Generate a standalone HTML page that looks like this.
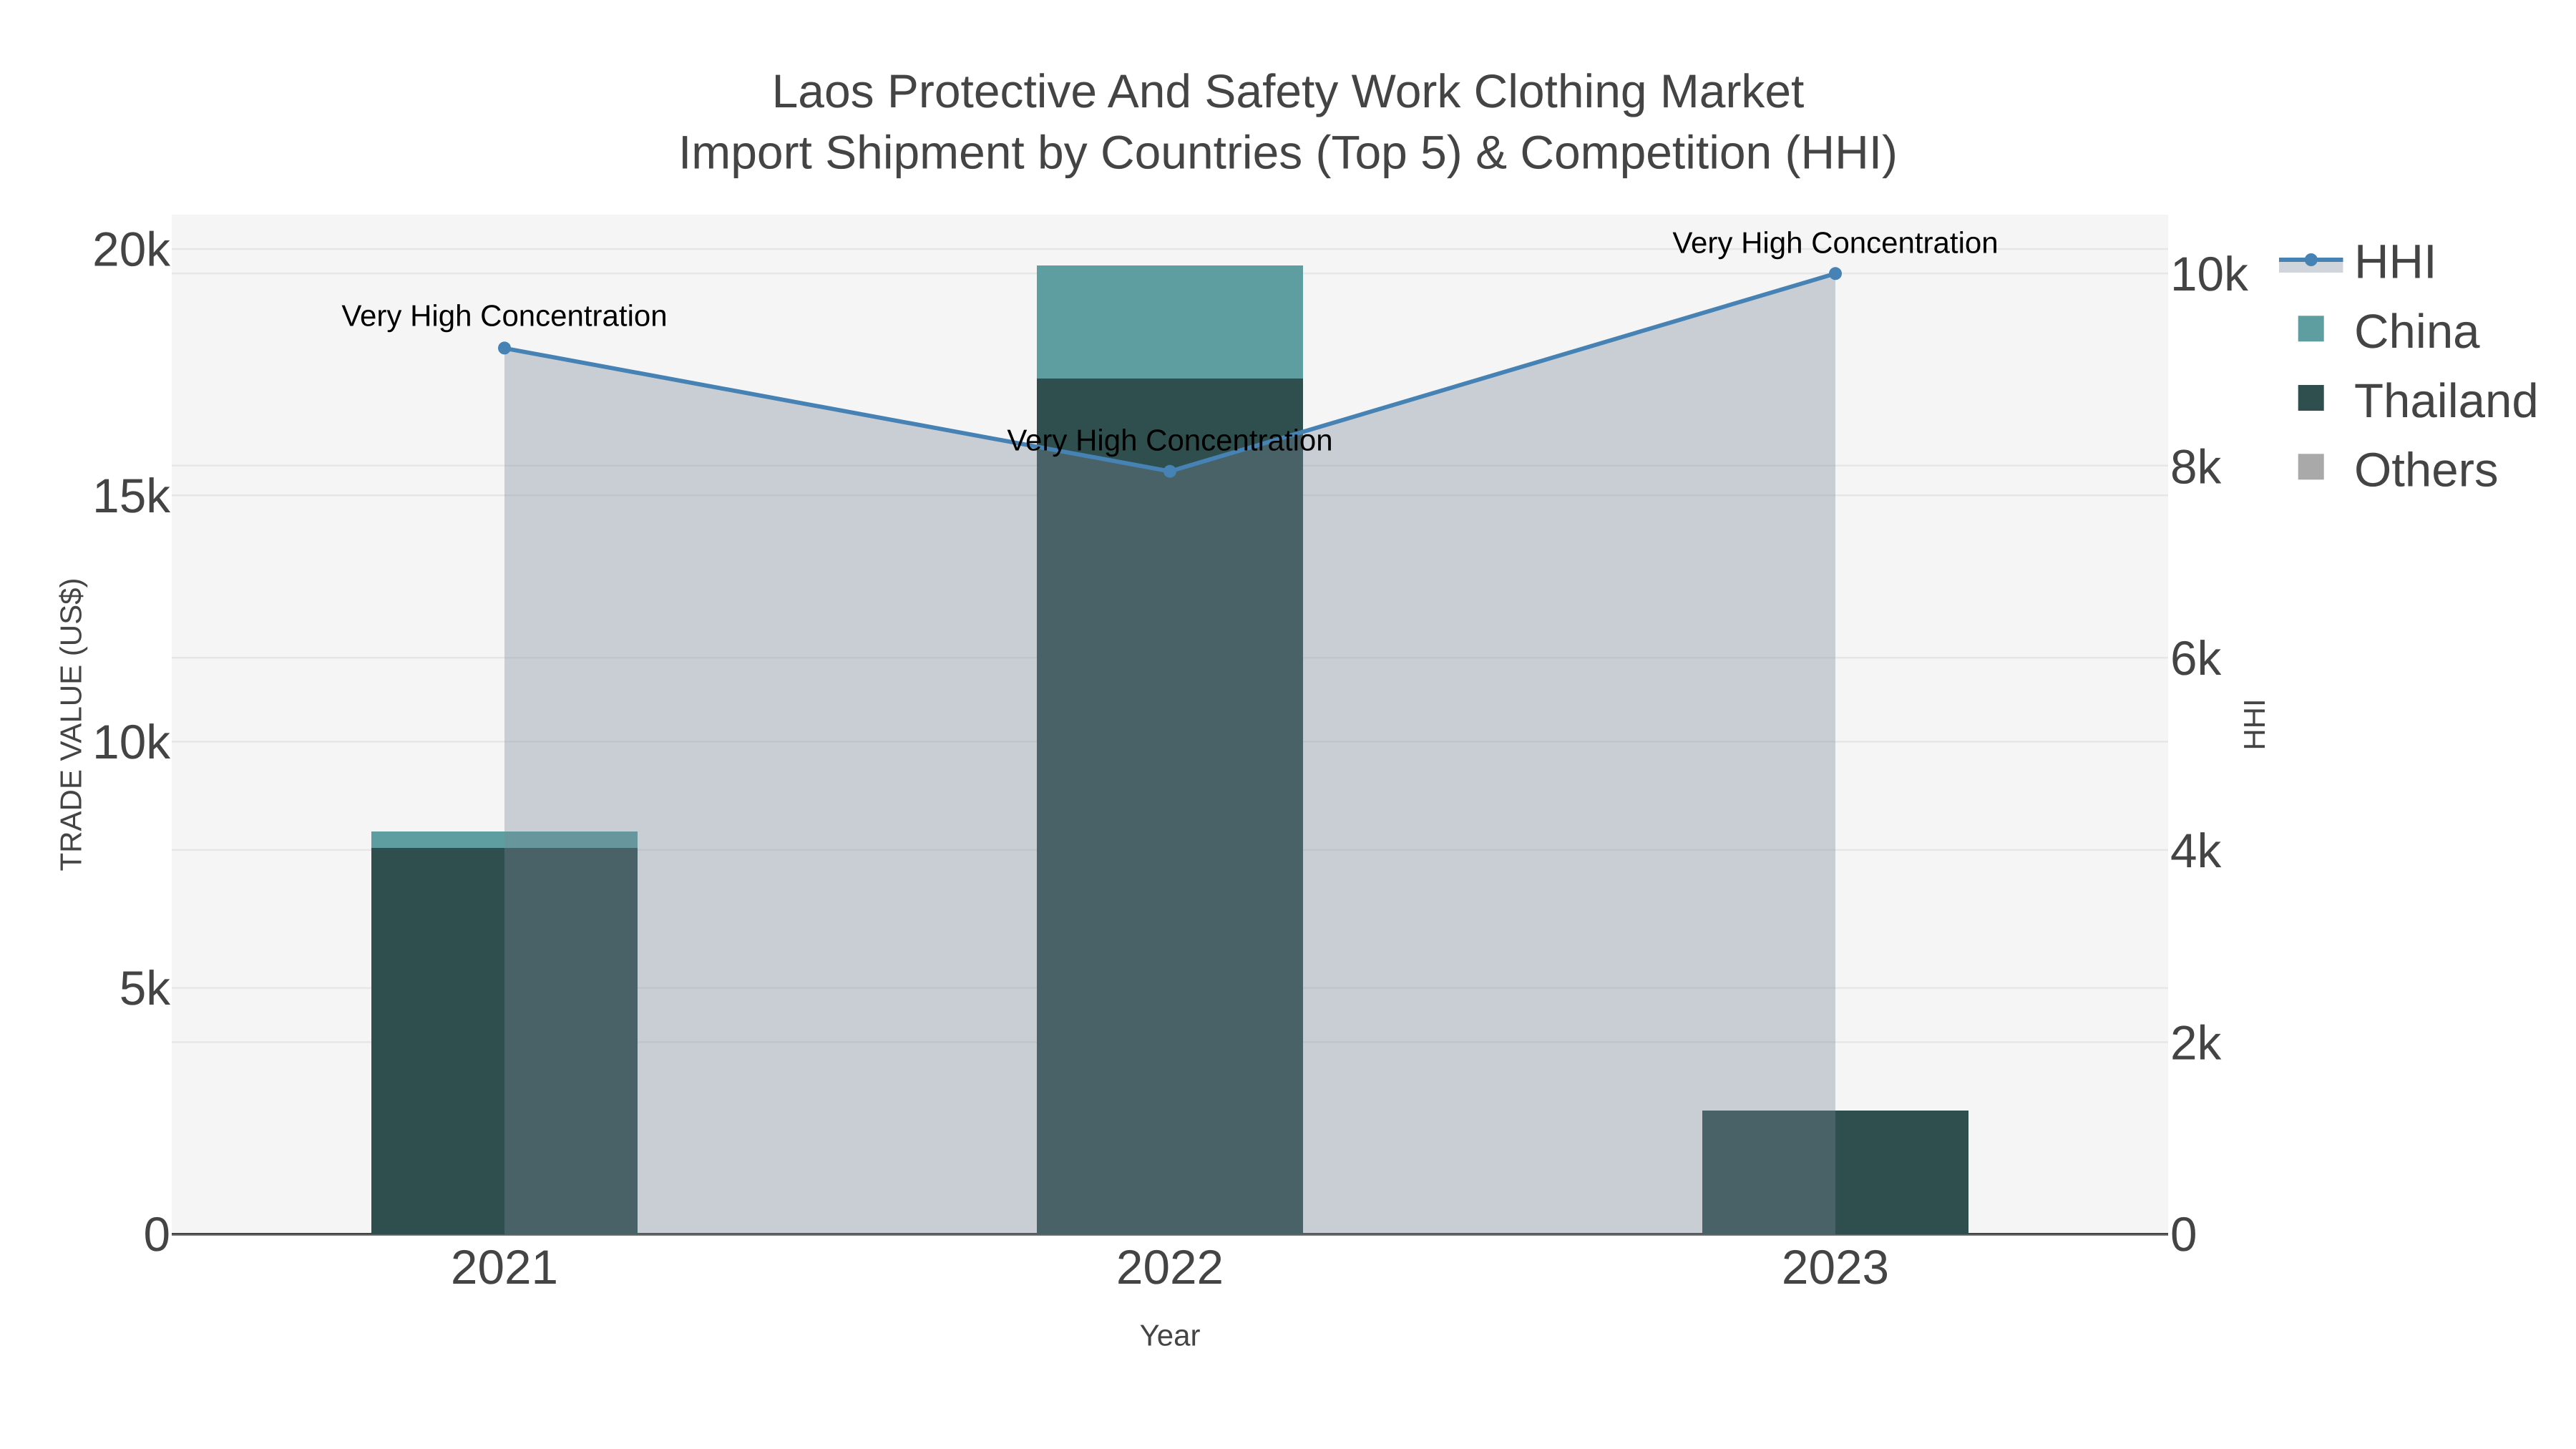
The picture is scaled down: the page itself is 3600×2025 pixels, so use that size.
<!DOCTYPE html>
<html lang="en">
<head>
<meta charset="utf-8">
<title>Laos Protective And Safety Work Clothing Market</title>
<style>
html,body{margin:0;padding:0;background:#fff;width:3600px;height:2025px;overflow:hidden}
svg{display:block;position:absolute;left:0;top:0}
text{font-family:"Liberation Sans",Arial,sans-serif;fill:#444;text-rendering:geometricPrecision}
.t{font-size:65.95px;text-anchor:middle}
.tick{font-size:67.5px}
.ax{font-size:42px}
.an{font-size:42px;fill:#000;text-anchor:middle}
.lg{font-size:67.2px}
</style>
</head>
<body>
<svg width="3600" height="2025" viewBox="0 0 3600 2025" xmlns="http://www.w3.org/2000/svg">
<rect width="3600" height="2025" fill="#fff"/>
<rect x="240" y="300" width="2790" height="1425" fill="#f5f5f5"/>
<g fill="#e6e6e6">
<rect x="240" y="346.8" width="2790" height="2.4"/>
<rect x="240" y="691" width="2790" height="2.4"/>
<rect x="240" y="1035.3" width="2790" height="2.4"/>
<rect x="240" y="1379.5" width="2790" height="2.4"/>
<rect x="240" y="380.9" width="2790" height="2.4"/>
<rect x="240" y="649.5" width="2790" height="2.4"/>
<rect x="240" y="918" width="2790" height="2.4"/>
<rect x="240" y="1186.6" width="2790" height="2.4"/>
<rect x="240" y="1455.2" width="2790" height="2.4"/>
</g>
<rect x="240" y="1723" width="2790" height="2" fill="#444"/>
<rect x="240" y="1725" width="2790" height="1.8" fill="#636363"/>
<!-- bars -->
<rect x="519" y="1162" width="372" height="23.5" fill="#5f9ea0"/>
<rect x="519" y="1185" width="372" height="540" fill="#2f4f4f"/>
<rect x="1449" y="371" width="372" height="158.5" fill="#5f9ea0"/>
<rect x="1449" y="529" width="372" height="196" fill="#2f4f4f"/>
<rect x="1449" y="725" width="372" height="1000" fill="#2f4f4f"/>
<rect x="2379" y="1552" width="372" height="173" fill="#2f4f4f"/>
<!-- area -->
<polygon points="705,486.6 1635,658.7 2565,382.3 2565,1725 705,1725" fill="#778899" fill-opacity="0.35"/>
<polyline points="705,486.6 1635,658.7 2565,382.3" fill="none" stroke="#4682b4" stroke-width="5.9" stroke-linejoin="round"/>
<circle cx="705" cy="486.4" r="9" fill="#4682b4"/>
<circle cx="1635" cy="658.7" r="9" fill="#4682b4"/>
<circle cx="2565" cy="382.3" r="9" fill="#4682b4"/>
<!-- annotations -->
<text class="an" x="705" y="455.6">Very High Concentration</text>
<text class="an" x="1635" y="629.5">Very High Concentration</text>
<text class="an" x="2565" y="353.6">Very High Concentration</text>
<!-- title -->
<text class="t" x="1800" y="150">Laos Protective And Safety Work Clothing Market</text>
<text class="t" x="1800" y="235.7">Import Shipment by Countries (Top 5) &amp; Competition (HHI)</text>
<!-- left ticks -->
<g class="tick" text-anchor="end">
<text x="238" y="371.5">20k</text>
<text x="238" y="716">15k</text>
<text x="238" y="1060">10k</text>
<text x="238" y="1404">5k</text>
<text x="238" y="1748">0</text>
</g>
<!-- right ticks -->
<g class="tick">
<text x="3033" y="406">10k</text>
<text x="3033" y="675.4">8k</text>
<text x="3033" y="943">6k</text>
<text x="3033" y="1212">4k</text>
<text x="3033" y="1480.5">2k</text>
<text x="3033" y="1748">0</text>
</g>
<!-- x ticks -->
<g class="tick" text-anchor="middle">
<text x="705" y="1794">2021</text>
<text x="1635" y="1794">2022</text>
<text x="2565" y="1794">2023</text>
</g>
<!-- axis titles -->
<text class="ax" text-anchor="middle" transform="translate(113.3 1012.5) rotate(-90)">TRADE VALUE (US$)</text>
<text class="ax" text-anchor="middle" transform="translate(3165 1012.5) rotate(-90)">HHI</text>
<text class="ax" text-anchor="middle" x="1635" y="1880.7">Year</text>
<!-- legend -->
<rect x="3185" y="363" width="89.5" height="18" fill="#778899" fill-opacity="0.35"/>
<rect x="3185" y="360" width="89.5" height="6" fill="#4682b4"/>
<circle cx="3229.8" cy="363" r="9" fill="#4682b4"/>
<rect x="3211.7" y="441.3" width="36" height="36" fill="#5f9ea0"/>
<rect x="3211.7" y="538" width="36" height="36" fill="#2f4f4f"/>
<rect x="3211.7" y="634.3" width="36" height="36" fill="#a9a9a9"/>
<g class="lg">
<text x="3290" y="388.3">HHI</text>
<text x="3290" y="486">China</text>
<text x="3290" y="583">Thailand</text>
<text x="3290" y="679.5">Others</text>
</g>
</svg>
</body>
</html>
